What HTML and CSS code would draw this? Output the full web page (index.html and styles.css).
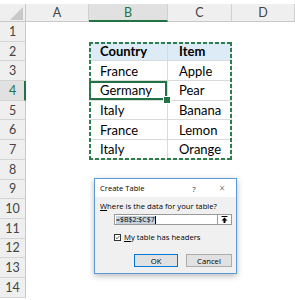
FILE: index.html
```html
<!DOCTYPE html>
<html>
<head>
<meta charset="utf-8">
<link rel="stylesheet" href="styles.css">
</head>
<body>
<div class="sheet">
  <div class="corner"><div class="tri"></div></div>
  <div class="ch">A</div>
  <div class="ch sel">B</div>
  <div class="ch">C</div>
  <div class="ch">D</div>
  <div class="rh">1</div>
  <div class="rh">2</div>
  <div class="rh">3</div>
  <div class="rh sel">4</div>
  <div class="rh">5</div>
  <div class="rh">6</div>
  <div class="rh">7</div>
  <div class="rh">8</div>
  <div class="rh">9</div>
  <div class="rh">10</div>
  <div class="rh">11</div>
  <div class="rh">12</div>
  <div class="rh">13</div>
  <div class="rh">14</div>
  <div class="tbl">
    <div class="cell hd first">Country</div><div class="cell hd">Item</div>
    <div class="cell first">France</div><div class="cell">Apple</div>
    <div class="cell first active">Germany</div><div class="cell">Pear</div>
    <div class="cell first">Italy</div><div class="cell">Banana</div>
    <div class="cell first">France</div><div class="cell">Lemon</div>
    <div class="cell first">Italy</div><div class="cell">Orange</div>
  </div>
</div>

<div class="dialog">
  <div class="titlebar">
    <span class="title">Create Table</span>
    <span class="tbtn">?</span>
    <span class="tbtn close">×</span>
  </div>
  <div class="dbody">
    <div class="label"><u>W</u>here is the data for your table?</div>
    <div class="refrow">
      <div class="refedit"><span class="seltext">=$B$2:$C$7</span><span class="caret"></span></div>
      <div class="refbtn">
        <svg width="7" height="7" viewBox="0 0 7 7"><rect x="0.5" y="0" width="6" height="1" fill="#000"/><path d="M3.5 1.5 L6.5 4.5 L4.5 4.5 L4.5 7 L2.5 7 L2.5 4.5 L0.5 4.5 Z" fill="#000"/></svg>
      </div>
    </div>
    <div class="checkrow">
      <div class="checkbox"><svg width="7" height="7" viewBox="0 0 7 7"><path d="M1 3.6 L2.8 5.3 L6 1.6" fill="none" stroke="#222" stroke-width="1"/></svg></div>
      <span><u>M</u>y table has headers</span>
    </div>
    <div class="btnrow">
      <div class="btn ok">OK</div>
      <div class="btn">Cancel</div>
    </div>
  </div>
</div>
</body>
</html>
```

FILE: styles.css
```css
* { box-sizing: border-box; }
html, body { margin: 0; padding: 0; background: #fff; }
body { position: relative; width: 295px; height: 300px; overflow: hidden; }

.sheet {
  margin-top: 4px;
  display: grid;
  grid-template-columns: 26px 63px 79px 64px 63px;
  grid-template-rows: 18px repeat(14, 19.7px);
  font-family: "Lato", "Liberation Sans", sans-serif;
}

.corner {
  background: #efefef;
  border-right: 1px solid #c8c8c8;
  border-bottom: 1px solid #c8c8c8;
  position: relative;
  display: flex;
  justify-content: flex-end;
  align-items: flex-end;
  padding: 0 2px 1px 0;
}
.tri {
  width: 13px;
  height: 13px;
  background: #c9c9c9;
  clip-path: polygon(100% 0, 100% 100%, 0 100%);
}

.ch {
  background: #efefef;
  border-right: 1px solid #d0d0d0;
  border-bottom: 1px solid #c8c8c8;
  color: #444;
  font-size: 12.5px;
  display: flex;
  align-items: center;
  justify-content: center;
}
.ch.sel {
  background: #e1e1e1;
  color: #217346;
  border-bottom: 2px solid #217346;
  padding-top: 1px;
}

.rh {
  grid-column: 1;
  background: #efefef;
  border-right: 1px solid #c8c8c8;
  border-bottom: 1px solid #d4d4d4;
  color: #444;
  font-size: 12.5px;
  display: flex;
  align-items: center;
  justify-content: center;
}
.rh.sel {
  background: #e1e1e1;
  color: #217346;
  border-right: 2px solid #217346;
  padding-left: 1px;
}

.tbl {
  grid-column: 3 / 5;
  grid-row: 3 / 9;
  position: relative;
  display: grid;
  grid-template-columns: 79px 64px;
  grid-template-rows: repeat(6, 1fr);
}
.tbl::after {
  content: "";
  position: absolute;
  inset: 0;
  pointer-events: none;
  background:
    repeating-linear-gradient(90deg, #2f7d4f 0 4px, transparent 4px 6px) left top / 100% 2px no-repeat,
    repeating-linear-gradient(90deg, #2f7d4f 0 4px, transparent 4px 6px) left bottom / 100% 2px no-repeat,
    repeating-linear-gradient(180deg, #2f7d4f 0 4px, transparent 4px 6px) left top / 2px 100% no-repeat,
    repeating-linear-gradient(180deg, #2f7d4f 0 4px, transparent 4px 6px) right top / 2px 100% no-repeat;
}

.cell {
  font-size: 13px;
  color: #000;
  padding-left: 11px;
  display: flex;
  align-items: center;
  border-bottom: 1px solid #dadada;
  border-right: 1px solid #dadada;
}
.cell.hd {
  background: #ddebf7;
  font-weight: bold;
}
.cell.active {
  position: relative;
  box-shadow: inset 0 0 0 2px #217346;
}
.cell.active::after {
  content: "";
  position: absolute;
  right: -4px;
  bottom: -4px;
  width: 6px;
  height: 6px;
  background: #217346;
  border: 1px solid #fff;
  z-index: 2;
}

.dialog {
  position: absolute;
  left: 94px;
  top: 178px;
  width: 143px;
  height: 96px;
  border: 1px solid #5a9ad8;
  background: #f0f0f0;
  box-shadow: 0 2px 6px rgba(0, 0, 0, 0.28);
  font-family: "Open Sans", "Liberation Sans", sans-serif;
  font-size: 7.7px;
  color: #000;
  display: flex;
  flex-direction: column;
}
.titlebar {
  height: 18px;
  background: #fff;
  display: flex;
  align-items: center;
  padding: 0 9px 0 5px;
}
.title { flex: 1; font-size: 7.6px; }
.tbtn {
  width: 10px;
  text-align: center;
  font-size: 8px;
  color: #333;
}
.tbtn.close { margin-left: 18px; font-size: 10px; font-weight: 300; }

.dbody {
  display: flex;
  flex-direction: column;
  padding: 4px 4px 0 5px;
}
.label { line-height: 10px; height: 10px; white-space: nowrap; }
.refrow {
  display: flex;
  margin: 3px 0 0 14px;
  height: 11px;
}
.refedit {
  flex: 1;
  background: #fff;
  border: 1px solid #9a9a9a;
  display: flex;
  align-items: center;
  padding-left: 1px;
  font-size: 7px;
}
.seltext { background: #c8d2dd; line-height: 8px; }
.caret { width: 1px; height: 8px; background: #000; }
.refbtn {
  width: 14px;
  border: 1px solid #9a9a9a;
  border-left: none;
  background: #fff;
  display: flex;
  align-items: center;
  justify-content: center;
}
.checkrow {
  display: flex;
  align-items: center;
  gap: 3px;
  margin: 8px 0 0 14px;
  height: 8px;
  white-space: nowrap;
}
.checkbox {
  width: 7px;
  height: 7px;
  border: 1px solid #333;
  background: #fff;
  display: flex;
  align-items: center;
  justify-content: center;
}
.checkbox svg { display: block; }
.btnrow {
  display: flex;
  justify-content: flex-end;
  gap: 8px;
  margin-top: 13px;
}
.btn {
  width: 46px;
  height: 13px;
  border: 1px solid #adadad;
  background: #e1e1e1;
  display: flex;
  align-items: center;
  justify-content: center;
}
.btn.ok { width: 44px; border-color: #0078d7; }
```
